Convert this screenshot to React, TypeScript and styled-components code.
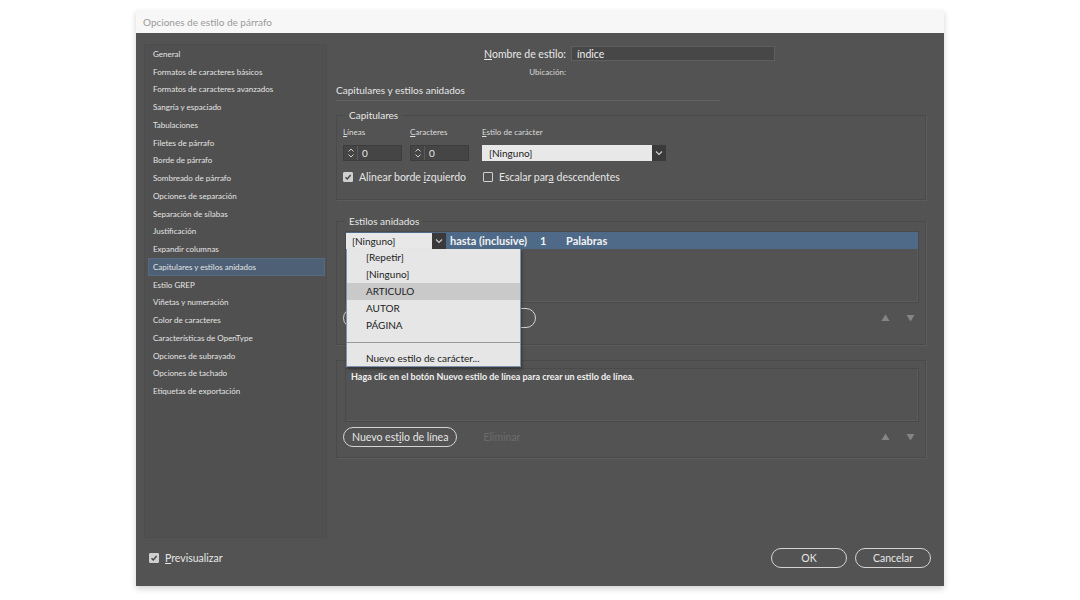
import styled, { createGlobalStyle } from 'styled-components';

const GlobalStyle = createGlobalStyle`
    body {
        margin: 0;
        background: #ffffff;
        font-family: Lato, "Open Sans", sans-serif;
    }
`;

const Page = styled.div`
    width: 1080px;
    height: 600px;
    padding: 10px 0 0 136px;
    box-sizing: border-box;
`;

const Dialog = styled.div`
    width: 808px;
    height: 576px;
    display: flex;
    flex-direction: column;
    background: #535353;
    box-shadow: 0 3px 6px rgba(0, 0, 0, 0.18);
`;

const TitleBar = styled.div`
    height: 23px;
    flex: none;
    background: #f7f7f7;
    color: #9a9a9a;
    font-size: 10px;
    display: flex;
    align-items: center;
    padding-left: 7px;
`;

const Body = styled.div`
    flex: 1;
    display: flex;
    flex-direction: column;
    padding: 11px 16px 0 8px;
`;

const Main = styled.div`
    display: flex;
    gap: 9px;
    height: 494px;
`;

const Sidebar = styled.div`
    width: 183px;
    flex: none;
    background: #505050;
    border: 1px solid #4d4d4d;
    box-sizing: border-box;
`;

const NavItem = styled.div<{ $active?: boolean }>`
    height: 17.75px;
    display: flex;
    align-items: center;
    margin: 0 1px 0 3px;
    padding-left: 5px;
    font-size: 8px;
    color: #e4e4e4;
    background: ${p => (p.$active ? '#4d6076' : 'transparent')};
    box-shadow: ${p => (p.$active ? 'inset 0 0 0 1px #56697f' : 'none')};
`;

const Content = styled.div`
    flex: 1;
    display: flex;
    flex-direction: column;
    padding: 2px 2px 0 0;
    color: #e6e6e6;
`;

const FieldRow = styled.div<{ $top?: number }>`
    display: grid;
    grid-template-columns: 230px 204px;
    column-gap: 5px;
    align-items: center;
    margin-top: ${p => p.$top ?? 0}px;
`;

const FieldLabel = styled.div<{ $small?: boolean }>`
    text-align: right;
    font-size: ${p => (p.$small ? 8 : 10.5)}px;
    color: ${p => (p.$small ? '#d8d8d8' : '#e8e8e8')};
    line-height: 10px;
`;

const NameInput = styled.div`
    height: 15px;
    box-sizing: border-box;
    background: #474747;
    border: 1px solid #5f5f5f;
    font-size: 10.5px;
    color: #eeeeee;
    display: flex;
    align-items: center;
    padding-left: 5px;
`;

const SectionTitle = styled.div`
    width: 384px;
    margin-top: 7px;
    padding-bottom: 4px;
    border-bottom: 1px solid #626262;
    font-size: 10px;
    line-height: 12px;
`;

const Group = styled.fieldset<{ $top: number; $bottom: number; $padTop?: number }>`
    margin: ${p => p.$top}px 0 0 0;
    padding: ${p => p.$padTop ?? 0}px 6px ${p => p.$bottom}px 6px;
    border: 1px solid #4a4a4a;
    box-shadow: 1px 1px 0 #5c5c5c;
    min-width: 0;
`;

const Legend = styled.legend`
    font-size: 10px;
    line-height: 12px;
    padding: 0 4px;
    margin-left: 2px;
    color: #e6e6e6;
`;

const Mn = styled.span`
    text-decoration: underline;
`;

const CapGrid = styled.div`
    display: grid;
    grid-template-columns: 67px 72px 184px;
    padding-top: 6px;
`;

const SmallLabel = styled.div`
    font-size: 8px;
    line-height: 10px;
    color: #dcdcdc;
    margin-bottom: 8px;
`;

const Spin = styled.div`
    width: 59px;
    height: 16px;
    box-sizing: border-box;
    display: flex;
    background: #454545;
    border: 1px solid #3d3d3d;
`;

const SpinArrows = styled.div`
    width: 13px;
    border-right: 1px solid #5a5a5a;
    display: flex;
    align-items: center;
    justify-content: center;
`;

const SpinValue = styled.div`
    flex: 1;
    font-size: 10px;
    color: #e8e8e8;
    display: flex;
    align-items: center;
    padding-left: 4px;
`;

const Select = styled.div<{ $w: number }>`
    width: ${p => p.$w}px;
    height: 16px;
    box-sizing: border-box;
    display: flex;
    background: #e8e8e8;
    flex: none;
`;

const SelectValue = styled.div<{ $pad: number }>`
    flex: 1;
    font-size: 10px;
    font-weight: 400;
    color: #222;
    display: flex;
    align-items: center;
    padding-left: ${p => p.$pad}px;
`;

const SelectButton = styled.div`
    width: 14px;
    background: #3a3a3a;
    display: flex;
    align-items: center;
    justify-content: center;
`;

const CheckRow = styled.div`
    display: grid;
    grid-template-columns: 140px auto;
    margin-top: 10px;
    height: 12px;
    align-items: center;
`;

const Check = styled.label`
    display: flex;
    align-items: center;
    gap: 6px;
    font-size: 10.5px;
    color: #e6e6e6;
`;

const Box = styled.span<{ $checked?: boolean }>`
    width: 10px;
    height: 10px;
    box-sizing: border-box;
    border-radius: 1px;
    background: ${p => (p.$checked ? '#cfcfcf' : 'transparent')};
    border: 1px solid #cfcfcf;
    display: flex;
    align-items: center;
    justify-content: center;
`;

const ListBox = styled.div<{ $h: number }>`
    margin: 4px 0 0 2px;
    height: ${p => p.$h}px;
    border: 1px solid #4a4a4a;
    box-shadow: inset -1px -1px 0 #5b5b5b;
`;

const NestedRow = styled.div`
    height: 17px;
    background: #4e6a88;
    display: flex;
    align-items: center;
    font-size: 11px;
    font-weight: 700;
    color: #f2f2f2;
`;

const SelectWrap = styled.div`
    position: relative;
    margin-right: 4px;
`;

const Menu = styled.div`
    position: absolute;
    top: 16px;
    left: 0;
    width: 175px;
    height: 118px;
    box-sizing: border-box;
    background: #e6e6e6;
    border: 1px solid #7b93ae;
    border-top: none;
    box-shadow: 1px 2px 3px rgba(0, 0, 0, 0.35);
    z-index: 2;
    font-weight: 400;
`;

const MenuItem = styled.div<{ $hover?: boolean }>`
    height: 17px;
    display: flex;
    align-items: center;
    padding-left: 19px;
    font-size: 10px;
    color: #222;
    background: ${p => (p.$hover ? '#c9c9c9' : 'transparent')};
`;

const MenuSep = styled.div`
    height: 1px;
    background: #9a9a9a;
    margin: 8px 0 7px 0;
`;

const Value = styled.span<{ $w: number }>`
    width: ${p => p.$w}px;
`;

const HintText = styled.div`
    font-size: 9px;
    font-weight: 700;
    color: #f0f0f0;
    padding: 2px 5px;
`;

const ButtonRow = styled.div<{ $gap?: number }>`
    display: flex;
    align-items: center;
    gap: ${p => p.$gap ?? 17}px;
    margin-top: 5px;
    height: 20px;
    padding-right: 4px;
`;

const Pill = styled.div<{ $w?: number; $disabled?: boolean }>`
    height: 20px;
    box-sizing: border-box;
    ${p => (p.$w ? `width: ${p.$w}px;` : 'padding: 0 8px;')}
    border: 1.5px solid ${p => (p.$disabled ? 'transparent' : '#d4d4d4')};
    border-radius: 10px;
    display: flex;
    align-items: center;
    justify-content: center;
    font-size: 10.5px;
    color: ${p => (p.$disabled ? '#6c6c6c' : '#e6e6e6')};
    white-space: nowrap;
`;

const Arrows = styled.div`
    margin-left: auto;
    display: flex;
    gap: 16px;
`;

const Footer = styled.div`
    flex: 1;
    display: flex;
    align-items: center;
    padding: 0 0 8px 5px;
    margin-right: -3px;
    gap: 8px;
`;

const Spacer = styled.div`
    flex: 1;
`;

const navItems = [
    'General',
    'Formatos de caracteres básicos',
    'Formatos de caracteres avanzados',
    'Sangría y espaciado',
    'Tabulaciones',
    'Filetes de párrafo',
    'Borde de párrafo',
    'Sombreado de párrafo',
    'Opciones de separación',
    'Separación de sílabas',
    'Justificación',
    'Expandir columnas',
    'Capitulares y estilos anidados',
    'Estilo GREP',
    'Viñetas y numeración',
    'Color de caracteres',
    'Características de OpenType',
    'Opciones de subrayado',
    'Opciones de tachado',
    'Etiquetas de exportación',
];

const Chevron = ({ color = '#cfcfcf' }: { color?: string }) => (
    <svg width="8" height="6" viewBox="0 0 8 6">
        <path d="M1 1.5 L4 4.5 L7 1.5" fill="none" stroke={color} strokeWidth="1.2"/>
    </svg>
);

const SpinIcon = () => (
    <svg width="8" height="12" viewBox="0 0 8 12">
        <path d="M1.5 4.5 L4 2 L6.5 4.5 M1.5 7.5 L4 10 L6.5 7.5" fill="none" stroke="#cfcfcf" strokeWidth="1"/>
    </svg>
);

const Tick = ({ color = '#444' }: { color?: string }) => (
    <svg width="8" height="8" viewBox="0 0 8 8">
        <path d="M1.5 4.2 L3.3 6 L6.6 2" fill="none" stroke={color} strokeWidth="1.4"/>
    </svg>
);

const Tri = ({ up }: { up?: boolean }) => (
    <svg width="9" height="8" viewBox="0 0 9 8">
        <path d={up ? 'M0.5 7 L4.5 0.5 L8.5 7 Z' : 'M0.5 1 L4.5 7.5 L8.5 1 Z'} fill="#858585"/>
    </svg>
);

export default function App() {
    return (
        <Page>
            <GlobalStyle/>
            <Dialog>
                <TitleBar>Opciones de estilo de párrafo</TitleBar>
                <Body>
                    <Main>
                        <Sidebar>
                            {navItems.map(item => (
                                <NavItem key={item} $active={item === 'Capitulares y estilos anidados'}>{item}</NavItem>
                            ))}
                        </Sidebar>
                        <Content>
                            <FieldRow>
                                <FieldLabel><Mn>N</Mn>ombre de estilo:</FieldLabel>
                                <NameInput>índice</NameInput>
                            </FieldRow>
                            <FieldRow $top={6}>
                                <FieldLabel $small>Ubicación:</FieldLabel>
                            </FieldRow>
                            <SectionTitle>Capitulares y estilos anidados</SectionTitle>

                            <Group $top={8} $bottom={16}>
                                <Legend>Capitulares</Legend>
                                <CapGrid>
                                    <div>
                                        <SmallLabel><Mn>L</Mn>íneas</SmallLabel>
                                        <Spin><SpinArrows><SpinIcon/></SpinArrows><SpinValue>0</SpinValue></Spin>
                                    </div>
                                    <div>
                                        <SmallLabel><Mn>C</Mn>aracteres</SmallLabel>
                                        <Spin><SpinArrows><SpinIcon/></SpinArrows><SpinValue>0</SpinValue></Spin>
                                    </div>
                                    <div>
                                        <SmallLabel><Mn>E</Mn>stilo de carácter</SmallLabel>
                                        <Select $w={184}>
                                            <SelectValue $pad={7}>[Ninguno]</SelectValue>
                                            <SelectButton><Chevron/></SelectButton>
                                        </Select>
                                    </div>
                                </CapGrid>
                                <CheckRow>
                                    <Check><Box $checked><Tick/></Box><span>Alinear borde <Mn>i</Mn>zquierdo</span></Check>
                                    <Check><Box/><span>Escalar par<Mn>a</Mn> descendentes</span></Check>
                                </CheckRow>
                            </Group>

                            <Group $top={15} $bottom={16}>
                                <Legend>Estilos anidados</Legend>
                                <ListBox $h={70}>
                                    <NestedRow>
                                        <SelectWrap>
                                            <Select $w={100}>
                                                <SelectValue $pad={6}>[Ninguno]</SelectValue>
                                                <SelectButton><Chevron/></SelectButton>
                                            </Select>
                                            <Menu>
                                                <MenuItem>[Repetir]</MenuItem>
                                                <MenuItem>[Ninguno]</MenuItem>
                                                <MenuItem $hover>ARTICULO</MenuItem>
                                                <MenuItem>AUTOR</MenuItem>
                                                <MenuItem>PÁGINA</MenuItem>
                                                <MenuSep/>
                                                <MenuItem>Nuevo estilo de carácter...</MenuItem>
                                            </Menu>
                                        </SelectWrap>
                                        <Value $w={90}>hasta (inclusive)</Value>
                                        <Value $w={26}>1</Value>
                                        <span>Palabras</span>
                                    </NestedRow>
                                </ListBox>
                                <ButtonRow>
                                    <Pill $w={193}/>
                                    <Arrows><Tri up/><Tri/></Arrows>
                                </ButtonRow>
                            </Group>

                            <Group $top={15} $bottom={10} $padTop={3}>
                                <ListBox $h={52}>
                                    <HintText>Haga clic en el botón Nuevo estilo de línea para crear un estilo de línea.</HintText>
                                </ListBox>
                                <ButtonRow>
                                    <Pill>Nuevo est<Mn>i</Mn>lo de línea</Pill>
                                    <Pill $disabled>Eliminar</Pill>
                                    <Arrows><Tri up/><Tri/></Arrows>
                                </ButtonRow>
                            </Group>
                        </Content>
                    </Main>
                    <Footer>
                        <Check><Box $checked><Tick/></Box><span><Mn>P</Mn>revisualizar</span></Check>
                        <Spacer/>
                        <Pill $w={76}>OK</Pill>
                        <Pill $w={76}>Cancelar</Pill>
                    </Footer>
                </Body>
            </Dialog>
        </Page>
    );
}
